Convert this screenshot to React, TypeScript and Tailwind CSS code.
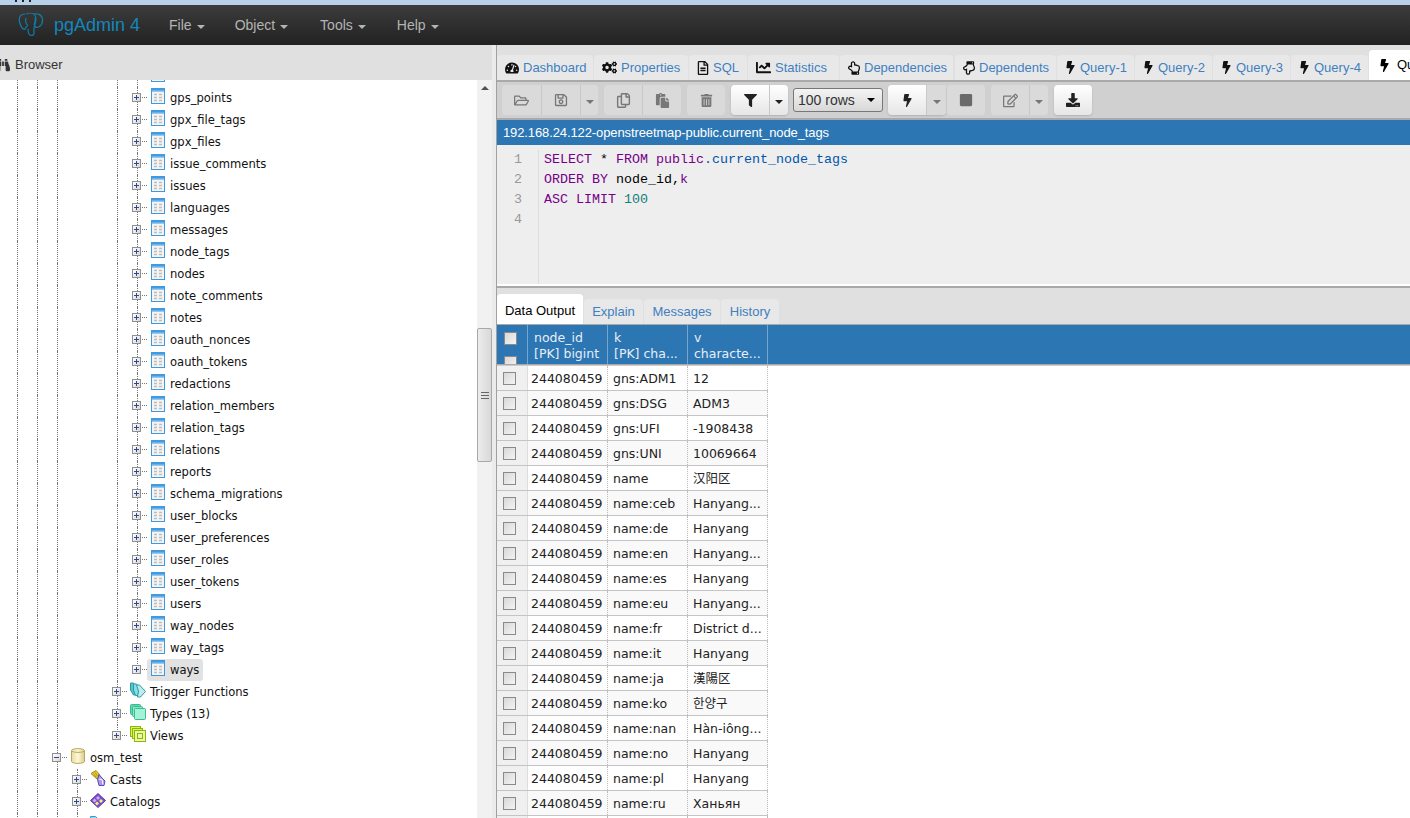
import React from "react";
import {
  FaTachometerAlt, FaCogs, FaRegFileAlt, FaChartLine, FaRegHandPointUp, FaRegHandPointDown, FaBolt,
  FaRegFolderOpen, FaRegSave, FaRegCopy, FaPaste, FaTrashAlt, FaFilter, FaStop, FaRegEdit, FaDownload, FaBinoculars,
} from "react-icons/fa";

type Kind = "table" | "trigger" | "types" | "views" | "db" | "casts" | "catalogs" | "folder";
type Row = { label: string; kind: Kind; guides: number[]; exp: number; minus?: boolean; last?: boolean; sel?: boolean };

const tableNames = ["", "gps_points", "gpx_file_tags", "gpx_files", "issue_comments", "issues", "languages", "messages", "node_tags", "nodes", "note_comments", "notes", "oauth_nonces", "oauth_tokens", "redactions", "relation_members", "relation_tags", "relations", "reports", "schema_migrations", "user_blocks", "user_preferences", "user_roles", "user_tokens", "users", "way_nodes", "way_tags", "ways"];

const rows: Row[] = [
  ...tableNames.map((label, i) => ({ label, kind: "table" as Kind, guides: [0, 1, 2, 5], exp: 6, last: i === tableNames.length - 1, sel: label === "ways" })),
  { label: "Trigger Functions", kind: "trigger", guides: [0, 1, 2], exp: 5 },
  { label: "Types (13)", kind: "types", guides: [0, 1, 2], exp: 5 },
  { label: "Views", kind: "views", guides: [0, 1, 2], exp: 5, last: true },
  { label: "osm_test", kind: "db", guides: [0, 1], exp: 2, minus: true },
  { label: "Casts", kind: "casts", guides: [0, 1, 2], exp: 3 },
  { label: "Catalogs", kind: "catalogs", guides: [0, 1, 2], exp: 3 },
  { label: "", kind: "folder", guides: [0, 1, 2], exp: 3 },
];

function TreeIcon({ kind }: { kind: Kind }) {
  if (kind === "table")
    return (
      <svg width="14" height="16" viewBox="0 0 14 16" className="shrink-0">
        <defs><linearGradient id="tb" x1="0" y1="0" x2="0" y2="1"><stop offset="0" stopColor="#2f8fdc" /><stop offset="1" stopColor="#a8d4f5" /></linearGradient></defs>
        <rect x="0.5" y="0.5" width="13" height="15" fill="#f4f4f4" stroke="#3d9ae0" />
        <rect x="1" y="1" width="12" height="3" fill="url(#tb)" />
        <path d="M3 6.500h3M8 6.500h3M3 9.500h3M8 9.500h3M3 12.500h3M8 12.500h3" stroke="#bdbdbd" strokeWidth="1.4" />
      </svg>
    );
  if (kind === "trigger")
    return (
      <svg width="16" height="17" viewBox="0 0 16 17" className="shrink-0">
        <path d="M0.500 1h3l4 6-1 6h-3L0.500 8z" fill="#55c3cc" stroke="#2a9aa5" />
        <path d="M3.500 2h3l4 5.500-2 6h-3L3.500 8z" fill="#8adde2" stroke="#2a9aa5" />
        <path d="M6.500 3h3l6 6.500-5 5.500h-3L8.500 9z" fill="#bcecef" stroke="#2a9aa5" />
      </svg>
    );
  if (kind === "types")
    return (
      <svg width="16" height="16" viewBox="0 0 16 16" className="shrink-0">
        <rect x="0.5" y="0.5" width="10" height="10" rx="1" fill="#5fd8b4" stroke="#3dbb90" />
        <rect x="2.5" y="2.5" width="10" height="10" rx="1" fill="#8ae8c8" stroke="#3dbb90" />
        <rect x="4.5" y="4.5" width="11" height="11" rx="1" fill="#a6f2d6" stroke="#3dbb90" />
      </svg>
    );
  if (kind === "views")
    return (
      <svg width="16" height="16" viewBox="0 0 16 16" className="shrink-0">
        <rect x="0.5" y="0.5" width="10" height="10" fill="#d8f06a" stroke="#8cb800" />
        <rect x="2.5" y="2.5" width="10" height="10" fill="#d8f06a" stroke="#8cb800" />
        <rect x="4.5" y="4.5" width="11" height="11" fill="#e8f8a8" stroke="#8cb800" />
        <rect x="7.5" y="7.5" width="5" height="5" fill="#e8f8a8" stroke="#8cb800" />
      </svg>
    );
  if (kind === "db")
    return (
      <svg width="14" height="16" viewBox="0 0 14 16" className="shrink-0">
        <defs><linearGradient id="dbg" x1="0" y1="0" x2="1" y2="0"><stop offset="0" stopColor="#e8dca0" /><stop offset="0.5" stopColor="#fff8d8" /><stop offset="1" stopColor="#dccb88" /></linearGradient></defs>
        <path d="M0.5 2.5C0.5 0 13.5 0 13.5 2.5V13.5C13.5 16 0.5 16 0.5 13.5Z" fill="url(#dbg)" stroke="#b9a760" />
        <path d="M0.5 2.5C0.5 5 13.5 5 13.5 2.5" fill="none" stroke="#b9a760" />
      </svg>
    );
  if (kind === "casts")
    return (
      <svg width="16" height="16" viewBox="0 0 16 16" className="shrink-0">
        <path d="M1 3.500L6 0.500l3.500 4-2 5z" fill="#e6cc30" stroke="#a08c10" />
        <path d="M5 2.500l3 4M3.500 3.500l3 4" stroke="#a08c10" strokeWidth="0.8" />
        <path d="M9 4.500l3 3.500 3 3-1 4.500h-5L7.500 9.500z" fill="#a898ec" stroke="#5a48b0" />
        <path d="M9 9l3 .5 1 5" fill="none" stroke="#fff" strokeWidth="1" />
      </svg>
    );
  if (kind === "catalogs")
    return (
      <svg width="16" height="15" viewBox="0 0 16 15" className="shrink-0">
        <path d="M8 0.500l7.500 7-7.500 7-7.500-7z" fill="#7d4fd0" stroke="#5a36a8" />
        <path d="M8 3l2 2-2 2-2-2zM4.500 5.500l2 2-2 2-2-2z" fill="#c8b0f0" />
        <path d="M11 6l2 2-2 2-2-2z" fill="#f4f070" />
        <path d="M7 8.500l2 2-2 2-2-2z" fill="#f4f070" />
      </svg>
    );
  return (
    <svg width="16" height="16" viewBox="0 0 16 16" className="shrink-0">
      <path d="M0.500 2.500h5l2 2h8v10h-15z" fill="#9fd8ee" stroke="#2e9cc8" />
    </svg>
  );
}

function Expander({ minus }: { minus?: boolean }) {
  return (
    <span className="flex h-[9px] w-[9px] items-center justify-center border border-[#8f8f8f] bg-gradient-to-br from-white to-[#d8d8d8]">
      <svg width="7" height="7" viewBox="0 0 7 7">
        <path d={minus ? "M1 3.5h5" : "M1 3.5h5M3.5 1v5"} stroke="#33468f" strokeWidth="1" />
      </svg>
    </span>
  );
}

function TreeRow({ row }: { row: Row }) {
  const cells = Array.from({ length: row.exp + 1 }, (_, i) => i);
  const narrow = row.kind === "table" || row.kind === "db";
  return (
    <div className="flex h-[22px] shrink-0 items-center pl-[7px]">
      {cells.map((i) =>
        i === row.exp ? (
          <div key={i} className="relative flex h-full w-5 shrink-0 flex-col items-center">
            <div className={`w-0 border-l border-dotted border-[#777] ${row.last ? "h-1/2" : "h-full"}`} />
            <span className="absolute top-[6px] left-[5px]"><Expander minus={row.minus} /></span>
            <span className="absolute top-[10px] left-[15px] w-[5px] border-t border-dotted border-[#777]" />
          </div>
        ) : (
          <div key={i} className="flex h-full w-5 shrink-0 justify-center">
            {row.guides.includes(i) && <div className="h-full w-0 border-l border-dotted border-[#777]" />}
          </div>
        )
      )}
      <div className={`flex h-[22px] items-center rounded-[3px] pr-[4px] ${narrow ? "gap-[5px] pl-[4px]" : "gap-[4px] pl-[3px]"} ${row.sel ? "bg-[#e2e2e2]" : ""}`}>
        <span className="mb-[4px] flex"><TreeIcon kind={row.kind} /></span>
        {row.label && <span className="mt-[2px] text-[11.55px] whitespace-nowrap text-[#111]">{row.label}</span>}
      </div>
    </div>
  );
}

type Btn = { icon: React.ReactNode; w: number; on?: boolean; caret?: boolean };

function ToolGroup({ items, on, ml }: { items: Btn[]; on?: boolean; ml: string }) {
  return (
    <div className={`flex h-[30px] rounded-[4px] ${ml} ${on ? "bg-gradient-to-b from-white to-[#e6e6e6] shadow-[0_1px_2px_rgba(0,0,0,0.15)]" : "bg-[#dadada]"}`}>
      {items.map((b, i) => (
        <div key={i} style={{ width: b.w }} className={`flex items-center justify-center ${i > 0 ? "border-l border-[#c8c8c8]" : ""} ${b.caret && !b.on ? "rounded-r-[4px] bg-[#dadada]" : ""}`}>
          {b.caret ? <span className={`mt-[3px] h-0 w-0 border-x-[4px] border-t-[4px] border-x-transparent ${b.on ? "border-t-[#222]" : "border-t-[#777]"}`} /> : b.icon}
        </div>
      ))}
    </div>
  );
}

const data: [string, string][] = [
  ["gns:ADM1", "12"], ["gns:DSG", "ADM3"], ["gns:UFI", "-1908438"], ["gns:UNI", "10069664"], ["name", "汉阳区"], ["name:ceb", "Hanyang..."], ["name:de", "Hanyang"], ["name:en", "Hanyang..."], ["name:es", "Hanyang"], ["name:eu", "Hanyang..."], ["name:fr", "District d..."], ["name:it", "Hanyang"], ["name:ja", "漢陽区"], ["name:ko", "한양구"], ["name:nan", "Hàn-iông..."], ["name:no", "Hanyang"], ["name:pl", "Hanyang"], ["name:ru", "Ханьян"], ["", ""],
];

function CheckBox() {
  return <span className="block h-[13px] w-[13px] shrink-0 border border-[#8a8a8a] bg-gradient-to-br from-[#d8d8d8] to-[#f4f4f4]" />;
}

const mainTabs: [React.ReactNode, string, number, number, number][] = [
  [<FaTachometerAlt size={14} />, "Dashboard", 96, 14, 1],
  [<FaCogs size={15} />, "Properties", 94, 15, 1],
  [<FaRegFileAlt size={14} />, "SQL", 58, 12, 1],
  [<FaChartLine size={15} />, "Statistics", 91, 15, 1],
  [<FaRegHandPointUp size={14} />, "Dependencies", 113, 12, 2],
  [<FaRegHandPointDown size={14} />, "Dependents", 101, 12, 1],
  [<FaBolt size={13} />, "Query-1", 77, 11, 1],
  [<FaBolt size={13} />, "Query-2", 77, 11, 1],
  [<FaBolt size={13} />, "Query-3", 77, 11, 1],
  [<FaBolt size={13} />, "Query-4", 77, 11, 1],
];

const gray = "#777";

export default function App() {
  return (
    <div className="flex h-screen w-full flex-col overflow-hidden bg-white font-['Liberation_Sans',Arial,sans-serif]">
      <div className="flex h-[5px] shrink-0 gap-[5px] bg-[#b8d0e8] pl-[15px]">
        <span className="h-[2px] w-[2px] bg-[#222]" /><span className="h-[2px] w-[2px] bg-[#222]" /><span className="h-[2px] w-[2px] bg-[#222]" />
      </div>
      <nav className="flex h-[40px] shrink-0 items-center bg-gradient-to-b from-[#3c3c3c] to-[#222222] text-[14px] text-[#b4b4b4]">
        <svg width="26" height="26" viewBox="0 0 26 26" className="ml-[18px]" fill="none" stroke="#0f7fa8" strokeWidth="1.2">
          <path d="M7 2C2 2 0.5 6 1.500 10c.8 3 2.500 6 4 7 1.500 1 2.500-1 3-3" />
          <path d="M8 2c2-1 6-1 8 0 2 1 2.500 6 1 10-1 3-1.500 6-1 9 .2 2-2 3-4 2-1.500-1-2-3-2-6" />
          <path d="M16 2c4-1 8 1 8.500 5 .3 4-2 7-4 8-1.500.7-3 .5-3.500-1" />
          <path d="M8 6c-1 3 0 6 2 8M17 6c1 3 0 5-1 7" />
        </svg>
        <span className="ml-[10px] text-[18px] leading-none text-[#1287bd]">pgAdmin 4</span>
        <div className="ml-[29px] flex items-center">
          {([["File", 30], ["Object", 32], ["Tools", 31], ["Help", 0]] as [string, number][]).map(([t, m]) => (
            <div key={t} style={{ marginRight: m }} className="flex items-center gap-[5px]">
              <span>{t}</span>
              <span className="mt-[3px] h-0 w-0 border-x-[4px] border-t-[4px] border-x-transparent border-t-[#b4b4b4]" />
            </div>
          ))}
        </div>
      </nav>
      <div className="flex min-h-0 flex-1">
        <aside className="flex w-[492px] shrink-0 flex-col">
          <div className="flex h-[35px] shrink-0 items-center gap-[5px] bg-[#e0e0e0] pt-[4px] text-[13px] text-[#333]">
            <span className="-ml-[4px] flex"><FaBinoculars size={14} color="#333" /></span>
            <span>Browser</span>
          </div>
          <div className="flex min-h-0 flex-1">
            <div className="min-w-0 flex-1 overflow-hidden font-['DejaVu_Sans',sans-serif]">
              <div className="-mt-[15px] flex flex-col">
                {rows.map((r, i) => <TreeRow key={i} row={r} />)}
              </div>
            </div>
            <div className="flex w-[15px] shrink-0 flex-col items-center bg-[#f1f1f1]">
              <span className="mt-[6px] h-0 w-0 border-x-[4px] border-b-[4px] border-x-transparent border-b-[#505050]" />
              <div className="mt-[238px] flex h-[134px] w-full flex-col items-center justify-center rounded-[2px] border border-[#a8a8a8] bg-gradient-to-r from-[#ececec] to-[#d8d8d8]">
                <span className="h-[7px] w-[8px] border-y border-[#666] after:mt-[2px] after:block after:border-t after:border-[#666]" />
              </div>
            </div>
          </div>
        </aside>
        <div className="w-[4px] shrink-0 bg-[#ebebeb]" />
        <main className="flex min-w-0 flex-1 flex-col border-l border-[#a0a0a0] bg-white">
          <div className="flex h-[35px] shrink-0 items-end bg-[#e0e0e0] text-[13px]">
            {mainTabs.map(([ic, t, w, box, gap]) => (
              <div key={t} style={{ width: w, marginRight: gap }} className="flex h-[25px] shrink-0 items-center gap-[4px] rounded-t-[4px] bg-[#e8e8e8] pl-[8px] whitespace-nowrap text-[#3f80c0]">
                <span style={{ width: box }} className="flex shrink-0 justify-center text-[#111]">{ic}</span><span>{t}</span>
              </div>
            ))}
            <div className="flex h-[30px] flex-1 items-center gap-[6px] rounded-t-[4px] bg-white pl-[9px] text-black">
              <FaBolt size={13} /><span className="whitespace-nowrap">Qu</span>
            </div>
          </div>
          <div className="flex h-[40px] shrink-0 items-center border-y-2 border-[#a9a9a9] bg-[#d0d0d0] pl-[5px]">
            <ToolGroup ml="" items={[{ icon: <FaRegFolderOpen size={15} color={gray} />, w: 39 }, { icon: <FaRegSave size={14} color={gray} />, w: 39 }, { icon: null, w: 18, caret: true }]} />
            <ToolGroup ml="ml-[6px]" items={[{ icon: <FaRegCopy size={15} color={gray} />, w: 38 }, { icon: <FaPaste size={15} color={gray} />, w: 39 }]} />
            <ToolGroup ml="ml-[6px]" items={[{ icon: <FaTrashAlt size={13} color={gray} />, w: 38 }]} />
            <ToolGroup ml="ml-[6px]" on items={[{ icon: <FaFilter size={13} color="#222" />, w: 38 }, { icon: null, w: 19, caret: true, on: true }]} />
            <div className="ml-[5px] flex h-[24px] w-[90px] items-center justify-between rounded-[3px] border border-[#777] bg-gradient-to-b from-[#f4f4f4] to-[#d8d8d8] pr-[7px] pl-[4px] text-[14px] text-[#333]">
              <span>100 rows</span>
              <span className="h-0 w-0 border-x-[4px] border-t-[4px] border-x-transparent border-t-black" />
            </div>
            <ToolGroup ml="ml-[5px]" on items={[{ icon: <FaBolt size={13} color="#222" />, w: 38 }, { icon: null, w: 20, caret: true }]} />
            <ToolGroup ml="ml-[1px]" items={[{ icon: <FaStop size={14} color="#6a6a6a" />, w: 38 }]} />
            <ToolGroup ml="ml-[6px]" items={[{ icon: <FaRegEdit size={15} color={gray} />, w: 38 }, { icon: null, w: 19, caret: true }]} />
            <ToolGroup ml="ml-[6px]" on items={[{ icon: <FaDownload size={14} color="#222" />, w: 38 }]} />
          </div>
          <div className="flex h-[25px] shrink-0 items-center bg-[#2c76b4] pt-[1px] pl-[6px] text-[13px] tracking-[-0.11px] text-white">
            192.168.24.122-openstreetmap-public.current_node_tags
          </div>
          <div className="flex h-[139px] shrink-0 bg-[#eeeeee] pt-[5px] font-['Liberation_Mono',monospace] text-[13.33px] leading-[20px]">
            <div className="w-[42px] shrink-0 border-r border-[#ddd] pr-[16px] text-right text-[#999]">
              {[1, 2, 3, 4].map((n) => <div key={n}>{n}</div>)}
            </div>
            <div className="pl-[5px] text-black">
              <div><span className="text-[#770088]">SELECT</span> * <span className="text-[#770088]">FROM</span> <span className="text-[#770088]">public</span><span className="text-[#0055aa]">.current_node_tags</span></div>
              <div><span className="text-[#770088]">ORDER BY</span> node_id,<span className="text-[#770088]">k</span></div>
              <div><span className="text-[#770088]">ASC LIMIT</span> <span className="text-[#11807a]">100</span></div>
            </div>
          </div>
          <div className="h-[4px] shrink-0 border-b-2 border-[#a9a9a9] bg-white" />
          <div className="flex h-[36px] shrink-0 items-end bg-[#e0e0e0] text-[13px]">
            <div className="mr-[1px] flex h-[30px] w-[86px] items-center justify-center rounded-t-[4px] bg-white pt-[4px] text-black">Data Output</div>
            {([["Explain", 59], ["Messages", 76], ["History", 58]] as [string, number][]).map(([t, w]) => (
              <div key={t} style={{ width: w }} className="mr-[1px] flex h-[25px] items-center justify-center rounded-t-[4px] bg-[#e8e8e8] text-[#3f80c0]">{t}</div>
            ))}
          </div>
          <div className="min-h-0 flex-1 overflow-hidden font-['DejaVu_Sans','Noto_Sans_CJK_SC',sans-serif] text-[12.5px]">
            <div className="flex h-[41px] border-y border-[#a9a9a9] bg-[#2c76b4] text-[#e8eef4]">
              <div className="w-[31px] shrink-0 overflow-hidden border-r border-[#7aa5cb] pt-[7px] pl-[7px]">
                <CheckBox />
                <div className="mt-[11px]"><CheckBox /></div>
              </div>
              {[["node_id", "[PK] bigint"], ["k", "[PK] cha..."], ["v", "characte..."]].map(([a, b]) => (
                <div key={a} className="w-[80px] shrink-0 border-r border-[#7aa5cb] pt-[5px] pl-[6px] leading-[16px]">
                  <div>{a}</div><div>{b}</div>
                </div>
              ))}
            </div>
            <div className="h-[1px] bg-[#ccc]" />
            {data.map(([k, v], i) => (
              <div key={i} className={`flex h-[25px] w-[271px] border-b border-[#c4c4c4] text-[#222] ${i % 2 ? "bg-[#f9f9f9]" : "bg-white"}`}>
                <div className="flex w-[31px] shrink-0 items-center border-r border-[#ddd] bg-[#f0f0f0] pl-[6px]"><CheckBox /></div>
                <div className="flex w-[80px] shrink-0 items-center border-r border-dotted border-[#bbb] pt-[2px] pl-[3px]">{k || v ? "244080459" : ""}</div>
                <div className="flex w-[80px] shrink-0 items-center border-r border-dotted border-[#bbb] pt-[2px] pl-[5px]">{k}</div>
                <div className="flex w-[80px] shrink-0 items-center border-r border-dotted border-[#bbb] pt-[2px] pl-[5px]">{v}</div>
              </div>
            ))}
          </div>
        </main>
      </div>
    </div>
  );
}
